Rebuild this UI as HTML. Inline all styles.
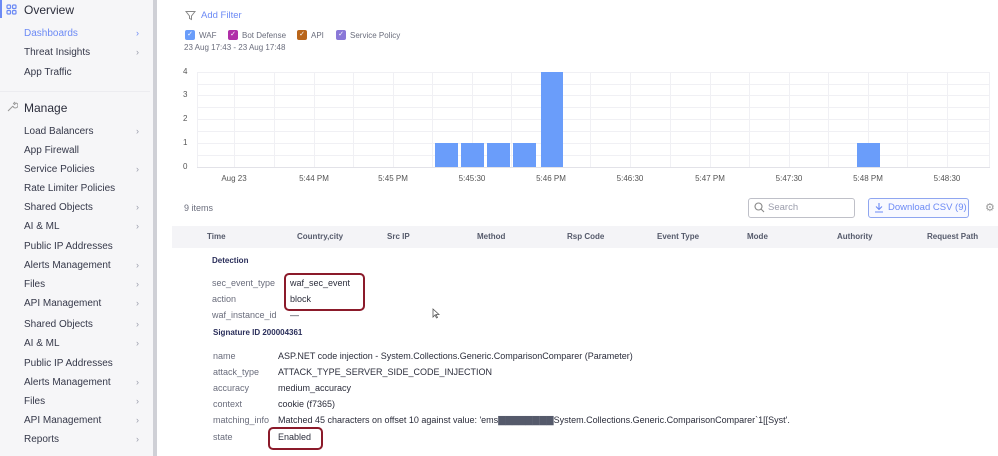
<!DOCTYPE html>
<html><head><style>
*{margin:0;padding:0;box-sizing:border-box}
body{width:998px;height:456px;overflow:hidden;background:#fff;font-family:"Liberation Sans",sans-serif;position:relative;color:#2b2d3b}
.a{position:absolute;white-space:nowrap}
#side{position:absolute;left:0;top:0;width:157px;height:456px;background:#f6f6f8;border-right:4px solid #cfd0d6}
.si{position:absolute;left:24px;font-size:10px;color:#353849}
.ch{position:absolute;left:136px;font-size:9px;color:#9a9cab}
.hd{position:absolute;left:24px;font-size:12px;color:#2b2d3b}
.gh{position:absolute;height:1px;background:#f0f0f4;left:197px;width:793px}
.gv{position:absolute;width:1px;background:#f0f0f4;top:72px;height:95px}
.bar{position:absolute;background:#6a9dfa}
.yl{position:absolute;left:183px;font-size:8px;color:#555}
.xl{position:absolute;top:174px;font-size:8px;color:#555;transform:translateX(-50%)}
.th{position:absolute;top:232px;font-size:8px;font-weight:bold;color:#555a6b}
.k{position:absolute;font-size:9px;color:#6a6d7c}
.v{position:absolute;font-size:9px;color:#2b2d3b}
.cb{position:absolute;top:30px;width:10px;height:10px;border-radius:2px;color:#fff;font-size:7px;text-align:center;line-height:10px}
.lg{position:absolute;top:31px;font-size:8px;color:#6a6d7c}
.box{position:absolute;border:2px solid #8b1a2a;border-radius:5px}
</style></head><body>
<div id="side">
<div style="position:absolute;left:0;top:0;width:2px;height:18px;background:#6c8af5"></div>
<svg class="a" style="left:6px;top:4px" width="11" height="11" viewBox="0 0 11 11" fill="none" stroke="#6c8af5" stroke-width="1.2"><rect x="1" y="1" width="3.5" height="3.5" rx="1"/><rect x="6.5" y="1" width="3.5" height="3.5" rx="1"/><rect x="1" y="6.5" width="3.5" height="3.5" rx="1"/><rect x="6.5" y="6.5" width="3.5" height="3.5" rx="1"/></svg>
<div class="hd" style="top:3px">Overview</div>
<div class="si" style="top:28px;color:#6c8af5">Dashboards</div><div class="ch" style="top:28px;color:#6c8af5">›</div>
<div class="si" style="top:47px">Threat Insights</div><div class="ch" style="top:47px">›</div>
<div class="si" style="top:67px">App Traffic</div>
<div style="position:absolute;left:0;top:91px;width:150px;height:1px;background:#ececf0"></div>
<svg class="a" style="left:6px;top:101px" width="12" height="12" viewBox="0 0 12 12" fill="none" stroke="#999" stroke-width="1"><path d="M2 10l5-5M7 5a2.5 2.5 0 1 0 3-3l-1.5 1.5-1-1L9 1"/></svg>
<div class="hd" style="top:101px">Manage</div>
<div class="si" style="top:126px">Load Balancers</div><div class="ch" style="top:126px">›</div>
<div class="si" style="top:145px">App Firewall</div>
<div class="si" style="top:164px">Service Policies</div><div class="ch" style="top:164px">›</div>
<div class="si" style="top:183px">Rate Limiter Policies</div>
<div class="si" style="top:202px">Shared Objects</div><div class="ch" style="top:202px">›</div>
<div class="si" style="top:221px">AI &amp; ML</div><div class="ch" style="top:221px">›</div>
<div class="si" style="top:241px">Public IP Addresses</div>
<div class="si" style="top:260px">Alerts Management</div><div class="ch" style="top:260px">›</div>
<div class="si" style="top:279px">Files</div><div class="ch" style="top:279px">›</div>
<div class="si" style="top:298px">API Management</div><div class="ch" style="top:298px">›</div>
<div class="si" style="top:319px">Shared Objects</div><div class="ch" style="top:319px">›</div>
<div class="si" style="top:338px">AI &amp; ML</div><div class="ch" style="top:338px">›</div>
<div class="si" style="top:358px">Public IP Addresses</div>
<div class="si" style="top:377px">Alerts Management</div><div class="ch" style="top:377px">›</div>
<div class="si" style="top:396px">Files</div><div class="ch" style="top:396px">›</div>
<div class="si" style="top:415px">API Management</div><div class="ch" style="top:415px">›</div>
<div class="si" style="top:434px">Reports</div><div class="ch" style="top:434px">›</div>
</div>

<svg class="a" style="left:185px;top:10px" width="11" height="11" viewBox="0 0 11 11" fill="none" stroke="#888" stroke-width="1"><path d="M1 1.5h9L6.5 6v3.5L4.5 8.5V6z"/></svg>
<div class="a" style="left:201px;top:10px;font-size:9.5px;color:#6c8af5">Add Filter</div>
<div class="cb" style="left:185px;background:#6a9dfa">✓</div><div class="lg" style="left:199px">WAF</div>
<div class="cb" style="left:228px;background:#b02fa8">✓</div><div class="lg" style="left:242px">Bot Defense</div>
<div class="cb" style="left:297px;background:#b9651a">✓</div><div class="lg" style="left:311px">API</div>
<div class="cb" style="left:336px;background:#8a78d8">✓</div><div class="lg" style="left:350px">Service Policy</div>
<div class="a" style="left:184px;top:43px;font-size:8px;color:#6a6d7c">23 Aug 17:43 - 23 Aug 17:48</div>

<div class="gh" style="top:72px"></div><div class="gh" style="top:84px"></div><div class="gh" style="top:95px"></div><div class="gh" style="top:107px"></div><div class="gh" style="top:119px"></div><div class="gh" style="top:131px"></div><div class="gh" style="top:143px"></div><div class="gh" style="top:155px"></div><div class="gh" style="top:167px;background:#e2e2e8"></div>
<div class="gv" style="left:197px"></div><div class="gv" style="left:234px"></div><div class="gv" style="left:274px"></div><div class="gv" style="left:314px"></div><div class="gv" style="left:353px"></div><div class="gv" style="left:393px"></div><div class="gv" style="left:432px"></div><div class="gv" style="left:472px"></div><div class="gv" style="left:511px"></div><div class="gv" style="left:551px"></div><div class="gv" style="left:590px"></div><div class="gv" style="left:630px"></div><div class="gv" style="left:670px"></div><div class="gv" style="left:710px"></div><div class="gv" style="left:749px"></div><div class="gv" style="left:789px"></div><div class="gv" style="left:828px"></div><div class="gv" style="left:868px"></div><div class="gv" style="left:907px"></div><div class="gv" style="left:947px"></div><div class="gv" style="left:989px"></div>
<div class="yl" style="top:67px">4</div><div class="yl" style="top:90px">3</div><div class="yl" style="top:114px">2</div><div class="yl" style="top:138px">1</div><div class="yl" style="top:162px">0</div>
<div class="bar" style="left:435px;top:143px;width:23px;height:24px"></div>
<div class="bar" style="left:461px;top:143px;width:23px;height:24px"></div>
<div class="bar" style="left:487px;top:143px;width:23px;height:24px"></div>
<div class="bar" style="left:513px;top:143px;width:23px;height:24px"></div>
<div class="bar" style="left:541px;top:72px;width:22px;height:95px"></div>
<div class="bar" style="left:857px;top:143px;width:23px;height:24px"></div>
<div class="xl" style="left:234px">Aug 23</div><div class="xl" style="left:314px">5:44 PM</div><div class="xl" style="left:393px">5:45 PM</div><div class="xl" style="left:472px">5:45:30</div><div class="xl" style="left:551px">5:46 PM</div><div class="xl" style="left:630px">5:46:30</div><div class="xl" style="left:710px">5:47 PM</div><div class="xl" style="left:789px">5:47:30</div><div class="xl" style="left:868px">5:48 PM</div><div class="xl" style="left:947px">5:48:30</div>

<div class="a" style="left:184px;top:203px;font-size:9px;color:#6a6d7c">9 items</div>
<div class="a" style="left:748px;top:198px;width:107px;height:20px;border:1px solid #bfc0c8;border-radius:3px"></div>
<svg class="a" style="left:754px;top:202px" width="11" height="11" viewBox="0 0 11 11" fill="none" stroke="#888" stroke-width="1.1"><circle cx="4.5" cy="4.5" r="3.5"/><path d="M7 7l3 3"/></svg>
<div class="a" style="left:768px;top:202px;font-size:9.5px;color:#9a9cab">Search</div>
<div class="a" style="left:868px;top:198px;width:101px;height:20px;border:1px solid #8fa6f0;border-radius:3px;background:#f8f9ff"></div>
<svg class="a" style="left:874px;top:202px" width="10" height="11" viewBox="0 0 10 11" fill="none" stroke="#6c8af5" stroke-width="1.1"><path d="M5 1v6M2 4.5L5 7.5 8 4.5M1 10h8"/></svg>
<div class="a" style="left:888px;top:202px;font-size:9.5px;color:#6c8af5">Download CSV (9)</div>
<div class="a" style="left:985px;top:201px;font-size:11px;color:#999">⚙</div>

<div class="a" style="left:172px;top:226px;width:826px;height:22px;background:#f4f4f7"></div>
<div class="th" style="left:207px">Time</div><div class="th" style="left:297px">Country,city</div><div class="th" style="left:387px">Src IP</div><div class="th" style="left:477px">Method</div><div class="th" style="left:567px">Rsp Code</div><div class="th" style="left:657px">Event Type</div><div class="th" style="left:747px">Mode</div><div class="th" style="left:837px">Authority</div><div class="th" style="left:927px">Request Path</div>

<div class="a" style="left:212px;top:256px;font-size:8px;font-weight:bold;color:#2a2e5a">Detection</div>
<div class="k" style="left:212px;top:278px">sec_event_type</div><div class="v" style="left:290px;top:278px">waf_sec_event</div>
<div class="k" style="left:212px;top:294px">action</div><div class="v" style="left:290px;top:294px">block</div>
<div class="k" style="left:212px;top:310px">waf_instance_id</div><div class="v" style="left:290px;top:310px">—</div>
<div class="box" style="left:284px;top:273px;width:81px;height:38px"></div>
<div class="a" style="left:213px;top:328px;font-size:8px;font-weight:bold;color:#2a2e5a">Signature ID 200004361</div>
<div class="k" style="left:213px;top:351px">name</div><div class="v" style="left:278px;top:351px">ASP.NET code injection - System.Collections.Generic.ComparisonComparer (Parameter)</div>
<div class="k" style="left:213px;top:367px">attack_type</div><div class="v" style="left:278px;top:367px">ATTACK_TYPE_SERVER_SIDE_CODE_INJECTION</div>
<div class="k" style="left:213px;top:383px">accuracy</div><div class="v" style="left:278px;top:383px">medium_accuracy</div>
<div class="k" style="left:213px;top:399px">context</div><div class="v" style="left:278px;top:399px">cookie (f7365)</div>
<div class="k" style="left:213px;top:415px">matching_info</div><div class="v" style="left:278px;top:415px">Matched 45 characters on offset 10 against value: 'ems<span style="color:#555a6b">▇▇▇▇▇▇▇▇</span>System.Collections.Generic.ComparisonComparer`1[[Syst'.</div>
<div class="k" style="left:213px;top:432px">state</div><div class="v" style="left:278px;top:432px">Enabled</div>
<div class="box" style="left:268px;top:427px;width:55px;height:23px"></div>
<svg class="a" style="left:432px;top:308px" width="8" height="11" viewBox="0 0 8 11" fill="#fff" stroke="#555" stroke-width="0.8"><path d="M1 1v8l2-2 1.5 3 1-.5L4 6.5h3z"/></svg>
</body></html>
